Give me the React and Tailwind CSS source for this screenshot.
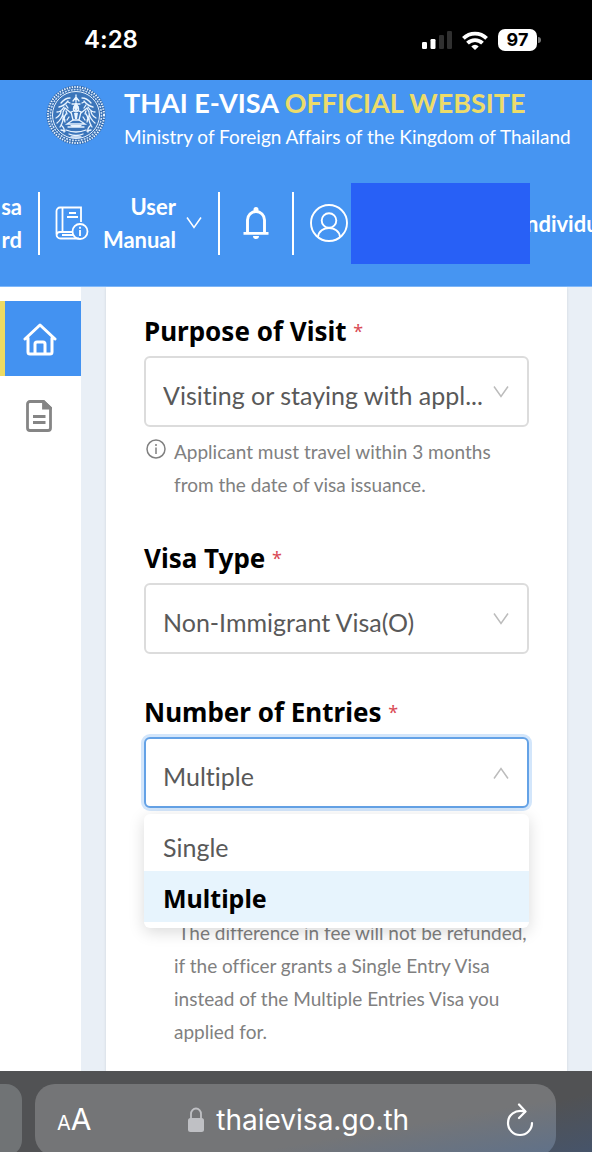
import React, { useState } from "react";

function Crest() {
  return (
    <svg viewBox="0 0 60 60" className="w-[60px] h-[60px] shrink-0" fill="none" aria-hidden="true">
      <circle cx="30" cy="30" r="29.5" fill="#2f68ae" />
      <circle cx="30" cy="30" r="28" stroke="#e6f2ff" strokeWidth="2" strokeDasharray="1.4 1.2" />
      <circle cx="30" cy="30" r="25.5" stroke="#c8dff8" strokeWidth="1.6" strokeDasharray="2 1" />
      <circle cx="30" cy="30" r="23.5" fill="#3b75ba" stroke="#e6f2ff" strokeWidth="1" />
      <g stroke="#e9f4ff" strokeWidth="1.3" strokeLinecap="round">
        <path d="M30 10v7M27 16l3-4 3 4M26 19h8M28 22a2.5 3 0 1 0 4 0M25 27l5-2 5 2-2 8h-6zM25 28l-6-5-2 4M35 28l6-5 2 4" />
        <path d="M27 35l-6 4h18l-6-4M22 42h16M20 45q10 4 20 0M23 49q7 3 14 0" />
        <path d="M15 18q4-5 9-5M13 22q5-1 9-6M11 27q4 0 7-5M10 33q5-3 5-7M11 38q5-4 6-10M14 42q4-6 3-12M19 37q-2-4 1-8M18 47q1-4-3-7" />
        <path d="M45 18q-4-5-9-5M47 22q-5-1-9-6M49 27q-4 0-7-5M50 33q-5-3-5-7M49 38q-5-4-6-10M46 42q-4-6-3-12M41 37q2-4-1-8M42 47q-1-4 3-7" />
        <path d="M20 20l2 3M40 20l-2 3M23 32l-2 3M37 32l2 3M17 34l2 1M43 34l-2 1M25 52h10M20 26l1 3M40 26l-1 3M22 17l2 1M38 17l-2 1M15 45l4 1M45 45l-4 1" />
      </g>
      <path d="M30 17l3 5-3 4-3-4zM28 28h4l-1 6h-2zM24 40h12l-2 2h-8z" fill="#e9f4ff" />
    </svg>
  );
}

function StatusBar() {
  return (
    <div className="h-20 bg-black text-white flex items-center justify-between pl-[84px] pr-[51px] font-[Inter,sans-serif]">
      <span className="text-2xl font-semibold">4:28</span>
      <div className="flex items-center gap-2.5">
        <svg viewBox="0 0 30 18" className="w-[30px] h-[18px]" aria-hidden="true">
          <rect x="0" y="11" width="5" height="7" rx="1.2" fill="#fff" />
          <rect x="8.5" y="8" width="5" height="10" rx="1.2" fill="#fff" />
          <rect x="17" y="4" width="5" height="14" rx="1.2" fill="#303030" />
          <rect x="25" y="0" width="5" height="18" rx="1.2" fill="#303030" />
        </svg>
        <svg viewBox="0 0 26 19" className="w-[26px] h-[19px]" fill="none" stroke="#fff" strokeWidth="3.8" aria-hidden="true">
          <path d="M1.4 7.4a16.4 16.4 0 0 1 23.200 0" />
          <path d="M5.500 12.200a10.600 10.600 0 0 1 15 0" />
          <path d="M13 19l-3.700-3.600a5.200 5.200 0 0 1 7.400 0z" fill="#fff" stroke="none" />
        </svg>
        <div className="flex items-center gap-px">
          <span className="w-[39px] h-[22px] rounded-[7px] bg-white text-black text-lg leading-none font-bold flex items-center justify-center">97</span>
          <span className="w-[3px] h-1.5 rounded-r bg-[#777]"></span>
        </div>
      </div>
    </div>
  );
}

function Chevron({ up }) {
  return (
    <svg viewBox="0 0 16 12" className="w-4 h-3 shrink-0" fill="none" stroke="currentColor" strokeWidth="1.5" aria-hidden="true">
      <path d={up ? "M1 11.5L8 1.5l7 10" : "M1 .5l7 10 7-10"} />
    </svg>
  );
}

function Header() {
  return (
    <header className="h-[207px] bg-[#4695f2] border-b border-[#7fb8fa] text-white overflow-hidden">
      <div className="flex gap-[18px] pl-[46px] pt-[5px] whitespace-nowrap">
        <Crest />
        <div className="pt-[3px]">
          <h1 className="text-[27px] leading-[30px] font-bold">
            THAI E-VISA <span className="text-[#eddc6a]">OFFICIAL WEBSITE</span>
          </h1>
          <p className="text-[19px] leading-[38px]">Ministry of Foreign Affairs of the Kingdom of Thailand</p>
        </div>
      </div>
      <nav className="flex items-center h-[82px] mt-[26px] text-[22px] leading-[33px] font-bold whitespace-nowrap">
        <a href="#evisa" className="w-10 pr-4 h-[63px] border-r-2 border-white flex items-center justify-end text-right shrink-0">
          <span>sa<br />rd</span>
        </a>
        <a href="#manual" className="w-[180px] h-[63px] border-r-2 border-white flex items-center pl-[15px] shrink-0">
          <svg viewBox="0 0 34 34" className="w-[34px] h-[34px]" fill="none" stroke="#fff" strokeWidth="1.8" aria-hidden="true">
            <path d="M26 16V1.5H5A3.5 3.5 0 0 0 1.5 5v23.5a4 4 0 0 0 4 4H24M7.500 1.500V26M1.500 29a3.500 3.500 0 0 1 3.500-3h12M7 29h11M12 11h11M14 7h7" />
            <circle cx="25" cy="25.500" r="7.500" />
            <path d="M25 24v6M25 20.800v2" />
          </svg>
          <span className="w-[87px] text-right">User<br />Manual</span>
          <span className="pl-2.5"><Chevron /></span>
        </a>
        <button type="button" aria-label="Notifications" className="w-[74px] h-[63px] border-r-2 border-white flex items-center justify-center shrink-0">
          <svg viewBox="0 0 26 32" className="w-[26px] h-8" aria-hidden="true">
            <path d="M4.500 26V13a8.500 8.500 0 0 1 17 0v13" fill="none" stroke="#fff" strokeWidth="2.900" />
            <path d="M.500 25h25v2.800H.500zM10.500 4V2.500a2.500 2.500 0 0 1 5 0V4zM10 29h6a3 3 0 0 1-6 0z" fill="#fff" />
          </svg>
        </button>
        <a href="#profile" className="flex items-center pl-4 shrink-0">
          <svg viewBox="0 0 38 38" className="w-[38px] h-[38px]" fill="none" stroke="#fff" strokeWidth="1.900" aria-hidden="true">
            <circle cx="19" cy="19" r="18" />
            <circle cx="19" cy="16.500" r="7.300" />
            <path d="M8 33c1-12 21-12 22 0" />
          </svg>
          <span className="w-[179px] h-[81px] ml-[3px] bg-[#2860f6]"></span>
          <span className="-ml-1 [clip-path:inset(0_0_0_4px)]">ndividual</span>
        </a>
      </nav>
    </header>
  );
}

function Sidebar() {
  return (
    <aside className="w-[81px] shrink-0 bg-white pt-3.5">
      <a href="#home" aria-label="Home" className="h-[75px] bg-[#4392f1] border-l-[5px] border-[#eddb62] flex items-center pl-[18px]">
        <svg viewBox="0 0 34 34" className="w-[34px] h-[34px]" fill="none" stroke="#fff" strokeWidth="3" strokeLinejoin="round" strokeLinecap="round" aria-hidden="true">
          <path d="M2 17L17 3l15 14M5 16v14q0 2 2 2h20q2 0 2-2V16" />
          <path d="M12 31V22q0-2 2-2h6q2 0 2 2v9" />
        </svg>
      </a>
      <a href="#documents" aria-label="Documents" className="h-20 flex items-center pl-[26px]">
        <svg viewBox="0 0 26 32" className="w-[26px] h-8" fill="none" stroke="#858585" strokeWidth="2.800" aria-hidden="true">
          <path d="M17.500 1.500H4A2.500 2.500 0 0 0 1.500 4v24A2.500 2.500 0 0 0 4 30.500h18a2.500 2.500 0 0 0 2.500-2.500V8z" />
          <path d="M17.500 1.500V8h7z" fill="#858585" />
          <path d="M7 16.500h12.500M7 22.500h12.500" />
        </svg>
      </a>
    </aside>
  );
}

function Field({ id, label, value, options, open, onChange }) {
  return (
    <div className="relative">
      <label htmlFor={id} className="block text-[26px] leading-[34px] font-bold text-black font-['Noto_Sans',sans-serif]">
        {label} <span className="text-lg leading-none align-[3px] font-normal text-[#d94a55]">*</span>
      </label>
      <div className={"relative mt-2 rounded-md border-2 bg-white " + (open ? "border-[#64a2e6] ring-3 ring-[#d3e6fb]" : "border-[#dcdcdc]")}>
        <select
          id={id}
          value={value}
          onChange={(e) => onChange(e.target.value)}
          className="block w-full h-[67px] pt-2 pl-[17px] pr-9 appearance-none bg-transparent text-[25px] text-[#595959] outline-none text-ellipsis [font-variant-ligatures:none]"
        >
          {options.map((option) => (
            <option key={option}>{option}</option>
          ))}
        </select>
        {/* arrow sits over the select */}
        <span className="absolute right-[18px] top-7 text-[#bcbcbc] pointer-events-none">
          <Chevron up={open} />
        </span>
      </div>
      {open && (
        <ul role="listbox" aria-label={label} className="absolute inset-x-0 top-full mt-1.5 z-10 py-1.5 rounded-md bg-white shadow-[0_4px_16px_rgba(0,0,0,0.15)] text-[25px] leading-[55px]">
          {options.map((option) => (
            <li
              key={option}
              role="option"
              aria-selected={option === value}
              onClick={() => onChange(option)}
              className={option === value ? "h-[51px] px-[19px] bg-[#e7f4fd] font-bold text-black font-['Noto_Sans',sans-serif]" : "h-[51px] px-[19px] text-[#595959]"}
            >
              {option}
            </li>
          ))}
        </ul>
      )}
    </div>
  );
}

function BrowserBar() {
  return (
    <footer className="h-[81px] shrink-0 overflow-hidden bg-[linear-gradient(165deg,#515254_75%,#46546a)] flex pt-[13px] pr-9 text-white font-[Inter,sans-serif]">
      <div className="w-[22px] h-[72px] mr-[13px] rounded-r-2xl bg-[#707375]"></div>
      <div className="flex-1 h-[72px] rounded-[20px] bg-[linear-gradient(170deg,#747577_65%,#5f718a)] flex items-center justify-between px-[22px]">
        <button type="button" aria-label="Page settings" className="leading-none">
          <span className="text-xl">A</span>
          <span className="text-[30px]">A</span>
        </button>
        <div className="flex items-center gap-3">
          <svg viewBox="0 0 16 26" className="w-4 h-[26px]" aria-hidden="true">
            <rect x="0" y="11" width="16" height="14" rx="2.500" fill="#bfc0c4" />
            <path d="M3 12V7a5 5.500 0 0 1 10 0v5" fill="none" stroke="#bfc0c4" strokeWidth="1.800" />
          </svg>
          <span className="text-[28px]">thaievisa.go.th</span>
        </div>
        <button type="button" aria-label="Reload">
          <svg viewBox="0 0 28 34" className="w-7 h-[34px]" fill="none" stroke="#fff" strokeWidth="2.200" strokeLinecap="round" strokeLinejoin="round" aria-hidden="true">
            <path d="M19 8.500C9 6 2 12 2 20a12 12 0 0 0 24 0" />
            <path d="M13 1.500l6.500 7L13 15" />
          </svg>
        </button>
      </div>
    </footer>
  );
}

export default function App() {
  const [purpose, setPurpose] = useState("Visiting or staying with appl...");
  const [visaType, setVisaType] = useState("Non-Immigrant Visa(O)");
  const [entries, setEntries] = useState("Multiple");

  return (
    <div className="min-h-screen flex flex-col bg-[#e9eff6] overflow-hidden font-[Lato,sans-serif] [font-variant-ligatures:none]">
      <StatusBar />
      <Header />
      <div className="flex-1 flex">
        <Sidebar />
        <main className="flex-1 mx-[25px] pl-[38px] pr-[38px] pt-[27px] bg-white shadow-sm">
          <Field id="purpose" label="Purpose of Visit" value={purpose} onChange={setPurpose} options={["Visiting or staying with appl..."]} />
          <div className="flex gap-2 mt-2 pl-0.5 text-[19px] leading-[33px] text-[#808080]">
            <svg viewBox="0 0 20 20" className="w-5 h-5 mt-1 shrink-0" fill="none" stroke="#808080" strokeWidth="1.500" aria-hidden="true">
              <circle cx="10" cy="10" r="9" />
              <path d="M10 8.500V15M10 5v2" />
            </svg>
            <p>Applicant must travel within 3 months from the date of visa issuance.</p>
          </div>

          <div className="mt-10">
            <Field id="visa-type" label="Visa Type" value={visaType} onChange={setVisaType} options={["Non-Immigrant Visa(O)"]} />
          </div>

          <div className="mt-[41px]">
            <Field id="entries" label="Number of Entries" value={entries} onChange={setEntries} options={["Single", "Multiple"]} open />
          </div>
          {/* fee note, partly under the open list */}
          <p className="mt-[108px] pl-[30px] text-[19px] leading-[33px] text-[#808080]">
            &nbsp;The difference in fee will not be refunded, if the officer grants a Single Entry Visa instead of the Multiple Entries Visa you applied for.
          </p>
        </main>
      </div>
      <BrowserBar />
    </div>
  );
}
